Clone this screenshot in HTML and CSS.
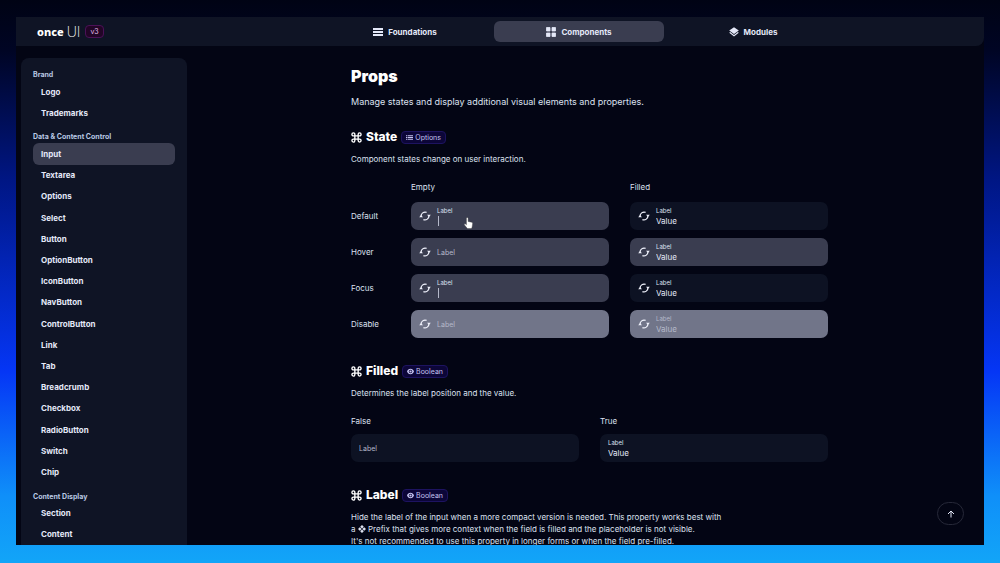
FILE: index.html
```
<!DOCTYPE html>
<html lang="en">
<head>
  <meta charset="UTF-8">
  <meta name="viewport" content="width=device-width, initial-scale=1.0">
  <title>Input - Once UI</title>
  <link rel="stylesheet" href="styles.css">
</head>
<body>
  <svg class="sprite" aria-hidden="true">
    <symbol id="icon-command" viewBox="0 0 12 12">
      <path d="M4.2 4.2h3.6v3.6H4.2zM4.2 4.2H2.6a1.6 1.6 0 1 1 1.6-1.6zM7.8 4.2V2.6a1.6 1.6 0 1 1 1.6 1.6zM7.8 7.8h1.6a1.6 1.6 0 1 1-1.6 1.6zM4.2 7.8v1.6a1.6 1.6 0 1 1-1.6-1.6z" fill="none" stroke="currentColor" stroke-width="1.500"/>
    </symbol>
    <symbol id="icon-sync" viewBox="0 0 12 12">
      <path d="M2.100 6.500A4 4 0 0 1 7.600 2.400M9.900 5.500A4 4 0 0 1 4.400 9.600" fill="none" stroke="currentColor" stroke-width="1.200"/>
      <path d="M.2 7.200L2 5 4 7.200zM11.800 4.800L10 7 8 4.800z" fill="currentColor"/>
    </symbol>
    <symbol id="icon-eye" viewBox="0 0 12 12">
      <path fill-rule="evenodd" d="M6 1.400C3.200 1.400 1 3.400 0 6c1 2.600 3.200 4.600 6 4.600s5-2 6-4.600C11 3.400 8.800 1.400 6 1.400zM6 9a3 3 0 1 1 0-6 3 3 0 0 1 0 6z" fill="currentColor"/>
      <circle cx="6" cy="6" r="1.900" fill="currentColor"/>
    </symbol>
    <symbol id="icon-options" viewBox="0 0 12 12">
      <path d="M0 2h2v2H0zM3 2h9v2H3zM0 5h2v2H0zM3 5h9v2H3zM0 8h2v2H0zM3 8h9v2H3z" fill="currentColor"/>
    </symbol>
    <symbol id="icon-prefix" viewBox="0 0 12 12">
      <path d="M6 0l2.700 2.700L6 5.400 3.300 2.700zM6 6.600l2.700 2.700L6 12 3.300 9.300zM2.700 3.300L5.400 6 2.700 8.700 0 6zM9.300 3.300L12 6 9.300 8.700 6.600 6z" fill="currentColor"/>
    </symbol>
  </svg>

  <div class="app">
    <header class="topbar">
      <a class="brand" href="#">
        <span class="brand-name">once</span>
        <span class="brand-ui">UI</span>
        <span class="version">v3</span>
      </a>
      <nav class="tabs">
        <a class="tab" href="#">
          <svg viewBox="0 0 10 10"><path d="M0 1h10v2H0zM0 4h10v2H0zM0 7h10v2H0z" fill="currentColor"/></svg>
          Foundations
        </a>
        <a class="tab active" href="#">
          <svg viewBox="0 0 10 10"><path d="M.5.5h3.500v3.500H.5zM6 .5h3.500v3.500H6zM.5 6h3.500v3.500H.5zM6 6h3.500v3.500H6z" fill="currentColor" stroke="currentColor" stroke-width=".8" stroke-linejoin="round"/></svg>
          Components
        </a>
        <a class="tab" href="#">
          <svg viewBox="0 0 10 10"><path d="M5 .2l4.800 3.400L5 7 .2 3.600zM.2 5.800l1-.7L5 7.900l3.800-2.800 1 .7L5 9.500z" fill="currentColor"/></svg>
          Modules
        </a>
      </nav>
    </header>

    <div class="layout">
      <nav class="sidebar">
        <h4>Brand</h4>
        <a href="#">Logo</a>
        <a href="#">Trademarks</a>
        <h4>Data &amp; Content Control</h4>
        <a class="active" href="#">Input</a>
        <a href="#">Textarea</a>
        <a href="#">Options</a>
        <a href="#">Select</a>
        <a href="#">Button</a>
        <a href="#">OptionButton</a>
        <a href="#">IconButton</a>
        <a href="#">NavButton</a>
        <a href="#">ControlButton</a>
        <a href="#">Link</a>
        <a href="#">Tab</a>
        <a href="#">Breadcrumb</a>
        <a href="#">Checkbox</a>
        <a href="#">RadioButton</a>
        <a href="#">Switch</a>
        <a href="#">Chip</a>
        <h4>Content Display</h4>
        <a href="#">Section</a>
        <a href="#">Content</a>
      </nav>

      <main class="content">
        <h1>Props</h1>
        <p class="lead">Manage states and display additional visual elements and properties.</p>

        <section>
          <h2>
            <svg><use href="#icon-command"/></svg>State
            <span class="tag"><svg><use href="#icon-options"/></svg>Options</span>
          </h2>
          <p>Component states change on user interaction.</p>
          <div class="states">
            <span></span>
            <span class="col-title">Empty</span>
            <span class="col-title">Filled</span>

            <span>Default</span>
            <div class="field hover">
              <svg><use href="#icon-sync"/></svg>
              <div class="field-text">
                <label for="default-empty">Label</label>
                <input type="text" id="default-empty">
                <i class="caret"></i>
              </div>
              <svg class="pointer" viewBox="0 0 10 13"><path d="M2.700 1.200c0-1.200 1.900-1.200 1.900 0v3.600l3.900.9c.8.200 1.200.7 1.100 1.500L9 11.100 8.300 12.700H3.800L.5 8.600c-.5-.8.500-1.600 1.200-1l1 .9z" fill="#fff" stroke="#333" stroke-width=".4"/></svg>
            </div>
            <div class="field">
              <svg><use href="#icon-sync"/></svg>
              <div class="field-text">
                <label for="default-filled">Label</label>
                <input type="text" id="default-filled" value="Value">
              </div>
            </div>

            <span>Hover</span>
            <div class="field hover">
              <svg><use href="#icon-sync"/></svg>
              <div class="field-text">
                <input type="text" placeholder="Label" aria-label="Label">
              </div>
            </div>
            <div class="field hover">
              <svg><use href="#icon-sync"/></svg>
              <div class="field-text">
                <label for="hover-filled">Label</label>
                <input type="text" id="hover-filled" value="Value">
              </div>
            </div>

            <span>Focus</span>
            <div class="field hover">
              <svg><use href="#icon-sync"/></svg>
              <div class="field-text">
                <label for="focus-empty">Label</label>
                <input type="text" id="focus-empty">
                <i class="caret"></i>
              </div>
            </div>
            <div class="field">
              <svg><use href="#icon-sync"/></svg>
              <div class="field-text">
                <label for="focus-filled">Label</label>
                <input type="text" id="focus-filled" value="Value">
              </div>
            </div>

            <span>Disable</span>
            <div class="field disabled">
              <svg><use href="#icon-sync"/></svg>
              <div class="field-text">
                <input type="text" placeholder="Label" aria-label="Label" disabled>
              </div>
            </div>
            <div class="field disabled">
              <svg><use href="#icon-sync"/></svg>
              <div class="field-text">
                <label for="disable-filled">Label</label>
                <input type="text" id="disable-filled" value="Value" disabled>
              </div>
            </div>
          </div>
        </section>

        <section>
          <h2>
            <svg><use href="#icon-command"/></svg>Filled
            <span class="tag"><svg><use href="#icon-eye"/></svg>Boolean</span>
          </h2>
          <p>Determines the label position and the value.</p>
          <div class="pair">
            <span class="col-title">False</span>
            <span class="col-title">True</span>
            <div class="field">
              <div class="field-text">
                <input type="text" placeholder="Label" aria-label="Label">
              </div>
            </div>
            <div class="field">
              <div class="field-text">
                <label for="filled-true">Label</label>
                <input type="text" id="filled-true" value="Value">
              </div>
            </div>
          </div>
        </section>

        <section>
          <h2>
            <svg><use href="#icon-command"/></svg>Label
            <span class="tag"><svg><use href="#icon-eye"/></svg>Boolean</span>
          </h2>
          <p>
            Hide the label of the input when a more compact version is needed. This property works best with<br>
            a <svg class="inline-icon"><use href="#icon-prefix"/></svg> Prefix that gives more context when the field is filled and the placeholder is not visible.<br>
            It's not recommended to use this property in longer forms or when the field pre-filled.
          </p>
        </section>
      </main>
    </div>

    <button class="to-top" type="button" aria-label="Back to top">
      <svg viewBox="0 0 8 8"><path d="M4 7.500V1M1 4l3-3 3 3" fill="none" stroke="currentColor" stroke-width="1"/></svg>
    </button>
  </div>
</body>
</html>
```
FILE: styles.css
```
* {
  box-sizing: border-box;
}

body {
  margin: 0;
  height: 100vh;
  padding: 17px 16px 18px;
  font-family: Inter, "Liberation Sans", sans-serif;
  font-size: 8px;
  color: #dde1f0;
  background: linear-gradient(#000314 0%, #000524 9%, #001684 32%, #0536f5 66%, #0f8ff9 88%, #12a5f8 100%);
  overflow: hidden;
}

a {
  color: inherit;
  text-decoration: none;
}

.sprite {
  position: absolute;
  width: 0;
  height: 0;
}

.app {
  position: relative;
  display: flex;
  flex-direction: column;
  height: 100%;
  background: #030514;
  overflow: hidden;
}

/* top bar */
.topbar {
  display: grid;
  grid-template-columns: 304px 1fr 146px;
  align-items: center;
  flex: none;
  height: 29px;
  background: #0f1425;
  border-radius: 0 0 8px 0;
}

.brand {
  display: flex;
  align-items: center;
  padding-left: 21px;
  color: #fff;
}

.brand-name {
  font-family: "Noto Sans", sans-serif;
  font-size: 11px;
  font-weight: 800;
}

.brand-ui {
  margin-left: 3px;
  font-size: 14px;
  font-weight: 200;
}

.version {
  margin-left: 5px;
  padding: 0 4px;
  font-size: 7px;
  line-height: 11px;
  color: #e3bfe6;
  background: #220526;
  border: 1px solid #4b1157;
  border-radius: 4px;
}

.tabs {
  display: flex;
  gap: 4px;
}

.tab {
  flex: 1;
  display: flex;
  align-items: center;
  justify-content: center;
  gap: 5px;
  height: 21px;
  border-radius: 6px;
  font-size: 8px;
  font-weight: 700;
  color: #e4e8f8;
}

.tab.active {
  background: #3a3d50;
}

.tab svg {
  width: 10px;
  height: 10px;
}

/* sidebar */
.layout {
  display: flex;
  flex: 1;
  min-height: 0;
}

.sidebar {
  display: flex;
  flex-direction: column;
  flex: none;
  width: 166px;
  margin: 12px 0 0 5px;
  padding: 11px 12px 0;
  background: #0f1425;
  border-radius: 8px 8px 0 0;
}

.sidebar h4 {
  flex: none;
  margin: 8px 0 0;
  font-size: 7px;
  line-height: 12px;
  font-weight: 700;
  color: #b9c9e4;
}

.sidebar h4:first-child {
  margin-top: 0;
}

.sidebar a {
  flex: 1 0 21px;
  display: flex;
  align-items: center;
  padding: 0 8px;
  border-radius: 6px;
  font-size: 8px;
  font-weight: 700;
  color: #e4e8f8;
}

.sidebar a.active {
  background: #3a3d50;
}

/* content */
.content {
  flex: 1;
  max-width: 485px;
  margin: 0 auto;
  padding: 20px 0 0 8px;
}

h1 {
  margin: 0;
  font-size: 16px;
  line-height: 20px;
  font-weight: 900;
  color: #fff;
}

.lead {
  margin: 9px 0 0;
  font-size: 9px;
  line-height: 14px;
}

section {
  margin-top: 20px;
}

section + section {
  margin-top: 25px;
}

h2 {
  display: flex;
  align-items: center;
  gap: 4px;
  margin: 0 0 8px;
  font-size: 12px;
  line-height: 16px;
  font-weight: 800;
  color: #fff;
}

h2 > svg {
  width: 11px;
  height: 11px;
}

.tag {
  display: flex;
  align-items: center;
  gap: 2px;
  padding: 0 4px;
  font-size: 7px;
  line-height: 11px;
  font-weight: 400;
  color: #c5c4f0;
  background: #0c0638;
  border: 1px solid #1d1360;
  border-radius: 4px;
}

.tag svg {
  width: 7px;
  height: 7px;
}

section p {
  margin: 0;
  font-size: 8px;
  line-height: 12px;
  white-space: nowrap;
}

.inline-icon {
  width: 8px;
  height: 8px;
  vertical-align: -1px;
}

.states,
.pair {
  display: grid;
  align-items: center;
  margin-top: 16px;
  line-height: 12px;
}

.states {
  grid-template-columns: 39px 1fr 1fr;
  gap: 8px 21px;
}

.states .col-title {
  margin-bottom: 1px;
}

.pair {
  grid-template-columns: 1fr 1fr;
  gap: 7px 21px;
}

.field {
  position: relative;
  display: flex;
  align-items: center;
  gap: 6px;
  height: 28px;
  padding: 0 8px;
  background: #0d1223;
  border-radius: 7px;
}

.field.hover {
  background: #3a3d50;
}

.field.disabled {
  background: #717589;
}

.field > svg {
  width: 12px;
  height: 12px;
  color: #eef0fa;
}

.field-text {
  position: relative;
  flex: 1;
  display: flex;
  flex-direction: column;
}

.field label {
  font-size: 6px;
  line-height: 9px;
}

.field input {
  width: 100%;
  height: 11px;
  padding: 0;
  border: 0;
  outline: 0;
  background: none;
  font: inherit;
  color: #e4e8f8;
}

.field input::placeholder {
  font-size: 7px;
  color: #b5b9ca;
  opacity: 1;
}

.field.disabled label,
.field.disabled input {
  color: #b5b9ca;
}

.caret {
  position: absolute;
  left: 1px;
  bottom: 0;
  width: 1px;
  height: 10px;
  background: #b5b9ca;
}

.field .pointer {
  position: absolute;
  left: 53px;
  top: 15px;
  width: 9px;
  height: 12px;
}

.to-top {
  position: absolute;
  right: 20px;
  bottom: 20px;
  display: flex;
  align-items: center;
  justify-content: center;
  width: 27px;
  height: 23px;
  padding: 0;
  color: #e4e8f8;
  background: none;
  border: 1px solid #262838;
  border-radius: 12px;
}

.to-top svg {
  width: 8px;
  height: 8px;
}
```
